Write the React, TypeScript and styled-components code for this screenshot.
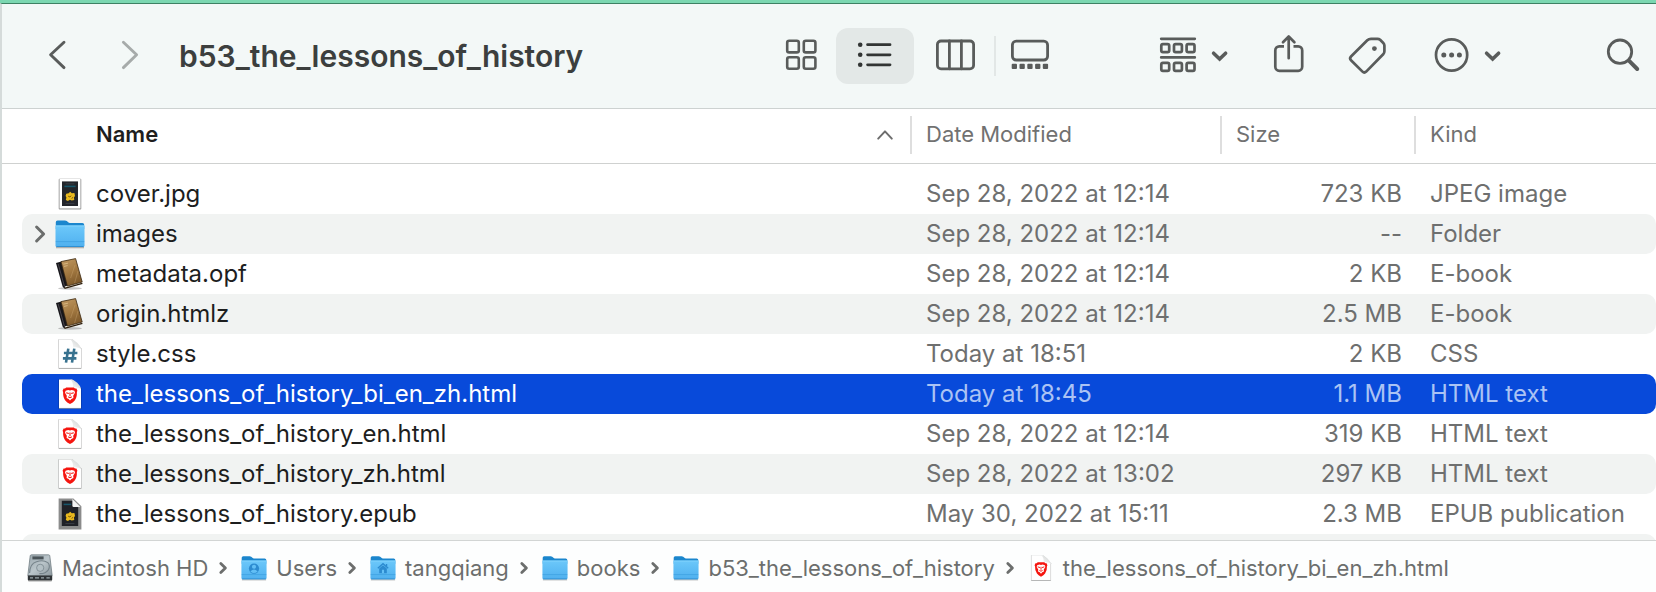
import React from 'react';
import styled, { createGlobalStyle, css } from 'styled-components';

const GlobalStyle = createGlobalStyle`
  *, *::before, *::after { box-sizing: border-box; }
  body {
    margin: 0;
    background: #ffffff;
    font-family: Inter, "Liberation Sans", sans-serif;
    -webkit-font-smoothing: antialiased;
  }
  svg { display: block; flex: none; overflow: visible; }
`;

const Window = styled.main`
  display: flex;
  flex-direction: column;
  height: 100vh;
  overflow: hidden;
  border-top: 3px solid #7bd7b1;
  background: #ffffff;
`;

const Frame = styled.div`
  flex: 1;
  min-height: 0;
  display: flex;
  flex-direction: column;
  border-top: 1px solid #3d8163;
  border-left: 2px solid #d5dbda;
`;

const Toolbar = styled.header`
  display: flex;
  align-items: center;
  gap: 40px;
  padding: 24px 16px 24px 46px;
  background: #f3f8f7;
  border-bottom: 1px solid #cdd2d1;
`;

const History = styled.nav`
  display: flex;
  gap: 55px;
`;

const Title = styled.h1`
  flex: 1;
  min-width: 0;
  margin: 0;
  overflow: hidden;
  white-space: nowrap;
  text-overflow: ellipsis;
  font-size: 30px;
  line-height: 36px;
  font-weight: 600;
  color: #3c3f3e;
`;

const Sections = styled.div`
  display: flex;
  align-items: center;
  gap: 97px;
`;

const ViewSwitch = styled.div`
  display: flex;
  align-items: center;
  gap: 2px;
`;

const Actions = styled.div`
  display: flex;
  align-items: center;
  gap: 40px;
`;

const ToolButton = styled.button<{ $width?: number; $active?: boolean; $divided?: boolean; $dim?: boolean }>`
  display: flex;
  align-items: center;
  justify-content: center;
  gap: 14px;
  width: ${(p) => (p.$width ? `${p.$width}px` : 'auto')};
  height: ${(p) => (p.$divided ? 40 : 56)}px;
  padding: 0;
  border: 0;
  border-right: ${(p) => (p.$divided ? '2px solid #e2e7e6' : '0')};
  border-radius: ${(p) => (p.$active ? 12 : 0)}px;
  background: ${(p) => (p.$active ? '#e3e8e7' : 'transparent')};
  color: ${(p) => (p.$active ? '#323534' : p.$dim ? '#a6abaa' : '#595c5b')};
`;

const Listing = styled.section`
  flex: 1;
  min-height: 0;
  overflow: hidden;
`;

const Table = styled.table`
  display: block;
  width: 100%;
  font-size: 24px;
`;

const columns = css`
  display: grid;
  grid-template-columns: minmax(0, 1fr) 310px 194px 240px;
  align-items: center;
`;

const Head = styled.thead`
  display: block;
  border-bottom: 1px solid #cfd1d0;
`;

const HeadRow = styled.tr`
  ${columns}
  padding: 7px 0 9px 20px;
`;

const HeadCell = styled.th<{ $sorted?: boolean }>`
  display: flex;
  align-items: center;
  justify-content: space-between;
  height: 38px;
  padding: 0 17px 2px 14px;
  border-right: 2px solid #dedede;
  font-size: 22px;
  line-height: 28px;
  text-align: left;
  font-weight: ${(p) => (p.$sorted ? 600 : 400)};
  color: ${(p) => (p.$sorted ? '#1e1e1e' : '#717171')};
  ${(p) => p.$sorted && css`padding-left: 74px;`}
  &:last-child { border-right: 0; }
`;

const SortMark = styled.span`
  display: flex;
  color: #6d6d6d;
`;

const Body = styled.tbody`
  display: block;
  padding: 10px 0 0 20px;
`;

const Row = styled.tr<{ $selected?: boolean }>`
  ${columns}
  height: 40px;
  border-radius: 10px;
  color: #6e6f6f;
  &:nth-child(even) { background: #f1f3f2; }
  ${(p) => p.$selected && css`
    && { background: #084ada; }
    color: #abc3f4;
  `}
`;

const Cell = styled.td<{ $end?: boolean }>`
  padding: 0 14px;
  overflow: hidden;
  white-space: nowrap;
  line-height: 40px;
  text-align: ${(p) => (p.$end ? 'right' : 'left')};
`;

const NameCell = styled.th<{ $selected?: boolean }>`
  display: flex;
  align-items: center;
  min-width: 0;
  padding: 0;
  white-space: nowrap;
  line-height: 40px;
  font-weight: 400;
  color: ${(p) => (p.$selected ? '#ffffff' : '#1d1e1e')};
`;

const ExpandSlot = styled.span`
  display: flex;
  flex: none;
  width: 33px;
  padding-left: 12px;
`;

const Expander = styled.button`
  padding: 0;
  border: 0;
  background: none;
  color: #6b6d6c;
`;

const FileGlyph = styled.span`
  display: flex;
  flex: none;
  margin-right: 11px;
`;

const PathBar = styled.nav`
  border-top: 1px solid #d2d5d4;
  background: #fdfefe;
`;

const Crumbs = styled.ol`
  display: flex;
  align-items: center;
  height: 51px;
  margin: 0;
  padding: 2px 0 0 25px;
  list-style: none;
`;

const Crumb = styled.li`
  display: flex;
  align-items: center;
  color: #6c6e6d;
`;

const CrumbLink = styled.a`
  display: flex;
  align-items: center;
  gap: 9px;
  color: inherit;
  text-decoration: none;
  white-space: nowrap;
  font-size: 22px;
  line-height: 28px;
`;

const CrumbArrow = styled.span`
  display: flex;
  margin: 0 14px 0 11px;
`;

type StrokeProps = { w: number; h?: number; sw?: number; children: React.ReactNode };
const Stroke = ({ w, h = 44, sw = 2.6, children }: StrokeProps) => (
  <svg width={w} height={h} viewBox={`0 0 ${w} ${h}`} fill="none" stroke="currentColor" strokeWidth={sw}
    strokeLinecap="round" strokeLinejoin="round" aria-hidden="true">{children}</svg>
);

const BackIcon = () => <Stroke w={18} sw={2.9}><path d="M16 8.2 2.6 20.8 16 33.6" /></Stroke>;
const ForwardIcon = () => <Stroke w={18} sw={2.9}><path d="M2.4 8.2 15.6 20.8 2.4 33.6" /></Stroke>;

const GridIcon = () => (
  <Stroke w={34} sw={2.6}>
    {[[4.2, 6.8], [20.8, 6.8], [4.2, 23.2], [20.8, 23.2]].map(([x, y]) => (
      <rect key={`${x}-${y}`} x={x} y={y} width="11.6" height="11.6" rx="2" />
    ))}
  </Stroke>
);

const ListIcon = () => (
  <Stroke w={36} sw={2.8}>
    {[10.7, 20.8, 30.8].map((y) => (
      <g key={y}>
        <circle cx="3.2" cy={y} r="2.3" fill="currentColor" stroke="none" />
        <path d={`M10.6 ${y}H33`} />
      </g>
    ))}
  </Stroke>
);

const ColumnsIcon = () => (
  <Stroke w={40} sw={2.8}>
    <rect x="2.4" y="7" width="36.2" height="27.8" rx="3.6" />
    <path d="M14.4 7v27.8M26.4 7v27.8" />
  </Stroke>
);

const GalleryIcon = () => (
  <Stroke w={40} sw={2.8}>
    <rect x="2.4" y="7.2" width="35.2" height="18.8" rx="3.8" />
    {[1.7, 9.5, 17.3, 25.1, 32.8].map((x) => (
      <rect key={x} x={x} y="29.8" width="5.3" height="5.3" rx="1" fill="currentColor" stroke="none" />
    ))}
  </Stroke>
);

const GroupIcon = () => (
  <Stroke w={38} sw={2.7}>
    <path d="M2.2 4.8H35.8M2.2 23.4H35.8" />
    {[10.2, 28.9].map((y) => [2.3, 15, 27.6].map((x) => (
      <rect key={`${x}-${y}`} x={x} y={y} width="7.9" height="7.9" rx="1.6" />
    )))}
  </Stroke>
);

const DownIcon = () => (
  <svg width="18" height="44" viewBox="0 0 18 44" fill="none" stroke="currentColor" strokeWidth="3.6"
    strokeLinecap="round" aria-hidden="true"><path d="M2.6 19.2 8.6 25l6-5.8" /></svg>
);

const ShareIcon = () => (
  <Stroke w={30} sw={2.7}>
    <path strokeLinecap="butt" d="M11 12.4H6.3a4 4 0 0 0-4 4v16.4a4 4 0 0 0 4 4h18.9a4 4 0 0 0 4-4V16.4a4 4 0 0 0-4-4h-4.7" />
    <path d="M15.7 24.2V2.6M10 8.2l5.7-5.7 5.7 5.7" />
  </Stroke>
);

const TagIcon = () => (
  <Stroke w={40} sw={2.7}>
    <path d="M24 4.8H30.5Q32 4.8 33.1 5.8L36.3 9Q37.4 10.1 37.4 11.6V17.2Q37.4 19 36.2 20.3L19.2 37.6Q17.3 39.4 15.5 37.6L4 26.2Q2.2 24.4 4 22.5L20.3 6.3Q21.8 4.8 24 4.8Z" />
    <circle cx="27.4" cy="14.6" r="2.4" fill="currentColor" stroke="none" />
  </Stroke>
);

const MoreIcon = () => (
  <Stroke w={36} sw={2.7}>
    <circle cx="17.6" cy="21" r="15.6" />
    {[9.8, 17.6, 25.4].map((x) => <circle key={x} cx={x} cy="21" r="2.5" fill="currentColor" stroke="none" />)}
  </Stroke>
);

const SearchIcon = () => (
  <Stroke w={34} sw={2.8}>
    <circle cx="14" cy="17.7" r="11.7" />
    <path strokeWidth="4" d="M23.4 27.2 31.2 35" />
  </Stroke>
);

const Gradients = () => (
  <svg width="0" height="0" style={{ position: 'absolute' }} aria-hidden="true">
    <defs>
      <linearGradient id="folderFront" x1="0" y1="0" x2="0" y2="1">
        <stop offset="0" stopColor="#6cc8fa" />
        <stop offset="1" stopColor="#4fb0ef" />
      </linearGradient>
      <linearGradient id="leather" x1="0" y1="0" x2="0.4" y2="1">
        <stop offset="0" stopColor="#c19a63" />
        <stop offset="0.55" stopColor="#a47a42" />
        <stop offset="1" stopColor="#805b2c" />
      </linearGradient>
      <linearGradient id="metal" x1="0" y1="0" x2="1" y2="1">
        <stop offset="0" stopColor="#9aa7ad" />
        <stop offset="0.5" stopColor="#bac5ca" />
        <stop offset="1" stopColor="#8d999f" />
      </linearGradient>
      <linearGradient id="fold" x1="0" y1="1" x2="1" y2="0">
        <stop offset="0" stopColor="#ffffff" />
        <stop offset="1" stopColor="#c9cccb" />
      </linearGradient>
    </defs>
  </svg>
);

const FolderIcon = ({ size = 30, badge }: { size?: number; badge?: 'user' | 'home' }) => (
  <svg width={size} height={size} viewBox="0 0 30 30" aria-hidden="true">
    <path d="M1 28.6h28" stroke="#000" strokeOpacity="0.28" strokeWidth="1.4" />
    <path d="M.8 3.2Q.8 1.4 2.6 1.4H10q1 0 1.8.7l1.4 1.2q.7.6 1.7.6H27.4q1.8 0 1.8 1.8V10H.8Z" fill="#1b86cd" />
    <path d="M.5 7.4Q.5 6.4 1.5 6.4H28.5q1 0 1 1V26.4q0 1.6-1.6 1.6H2.1Q.5 28 .5 26.4Z" fill="url(#folderFront)" />
    <path d="M.8 6.9H29.2" stroke="#93dcff" strokeWidth="0.8" />
    <path d="M.8 22.6H29.2" stroke="#3d9fe0" strokeWidth="0.8" />
    <path d="M1.4 27.5H28.6" stroke="#2f90d3" strokeWidth="1" />
    {badge === 'user' && (
      <g>
        <circle cx="15" cy="15.6" r="5.9" fill="#2c8bd0" />
        <circle cx="15" cy="13.6" r="2.4" fill="#62bff5" />
        <path d="M10.8 18.9q4.2-4.4 8.4 0-4.2 3.6-8.4 0Z" fill="#62bff5" />
      </g>
    )}
    {badge === 'home' && (
      <g>
        <path d="M9 15.4 15 10l6 5.4" fill="none" stroke="#2c8bd0" strokeWidth="1.6" />
        <path d="M10.6 15.6 15 11.7l4.4 3.9V21h-8.8ZM18.3 10.3h1.6v3h-1.6z" fill="#2c8bd0" />
        <path d="M13.8 17h2.4v4h-2.4z" fill="#62bff5" />
      </g>
    )}
  </svg>
);

const Blossom = () => (
  <g>
    <path d="M11.2 15.8l2.5-.6 1.5-1.4 1.6 1.5 2.6-.2.6 2.8-1.1 1.5.4 2.6-2.6.5-1.8-.8-2 1.3-2.1-1.1.6-2.5-.8-1.4Z" fill="#e9b91e" />
    <path d="M13.2 18.2l1.7.8 1.1-1.3M16.6 20.4l1.5-1" stroke="#7c560a" strokeWidth="1" fill="none" />
  </g>
);

const CoverIcon = () => (
  <svg width="30" height="32" viewBox="0 0 30 32" aria-hidden="true">
    <rect x="3.7" y=".7" width="22.6" height="30.9" rx="1" fill="#000" opacity="0.4" />
    <rect x="4.6" y="1" width="20.8" height="29.4" fill="#fff" />
    <rect x="7" y="3.4" width="16" height="24.6" fill="#23252b" />
    <path d="M9.4 8.4h11.2" stroke="#17566b" strokeWidth="1.6" />
    <path d="M10.6 5.8h8.8M10.6 25.4h8.8" stroke="#3c3f48" strokeWidth="0.9" />
    <Blossom />
  </svg>
);

const EpubIcon = () => (
  <svg width="30" height="32" viewBox="0 0 30 32" aria-hidden="true">
    <path d="M3.6 .6H18.4L26.4 8.2V31.4H3.6Z" fill="#000" opacity="0.45" />
    <path d="M4.4 1.2H18L25.6 8.6V30.6H4.4Z" fill="#8b8c8c" />
    <path d="M6.8 2.8H17.6L23.2 9V28H6.8Z" fill="#1f2127" />
    <path d="M8.6 6.4h7.6" stroke="#17566b" strokeWidth="1.5" />
    <path d="M10.4 25.6h9" stroke="#3c3f48" strokeWidth="0.9" />
    <path d="M17.4 1 25.4 9H18.6Q17.4 9 17.4 7.8Z" fill="#f4f4f4" />
    <Blossom />
  </svg>
);

const BookIcon = () => (
  <svg width="30" height="32" viewBox="0 0 30 32" aria-hidden="true">
    <ellipse cx="15" cy="30.4" rx="12" ry="1.3" fill="#000" opacity="0.22" />
    <path d="M1 4.9 6.4 3.4 13 28.4 9.4 30Q8 30 7.6 28.6Z" fill="#17161a" />
    <path d="M9.6 28.6 26.4 23.6 27.3 25.6 10.6 30.6Z" fill="#efe9dc" />
    <path d="M9.4 30.4 27.4 25.4" stroke="#2b1c0c" strokeWidth="1.2" />
    <path d="M6 3.6 20.6.6 27.2 24 12.4 28Z" fill="url(#leather)" stroke="#3a2710" strokeWidth="0.8" />
    <path d="M20 7 15.6 20M23 13l-3.4 12" stroke="#c9a570" strokeWidth="0.8" opacity="0.5" />
    <path d="M8.4 6.2l4.6-1M9 8.4l3.6-.8" stroke="#e0c08c" strokeWidth="0.8" />
    <path d="M3.2 6l6.2 22" stroke="#55525a" strokeWidth="0.8" />
  </svg>
);

const Page = () => (
  <g>
    <path d="M3.4 1.2H17.6L26.6 10.4V30.8H3.4Z" fill="#000" opacity="0.26" />
    <path d="M4 1.4H17.4L26 10.4V30.2H4Z" fill="#fff" />
    <path d="M15.4 1.4Q18.4 4 18 9.4 23 8.8 26 10.8 25.2 7.6 22.2 4.8 18.6 1.4 15.4 1.4Z" fill="url(#fold)" />
    <path d="M4 30.4H26" stroke="#8e9090" strokeOpacity="0.7" strokeWidth="0.8" />
  </g>
);

const HtmlIcon = ({ width = 30, height = 32 }: { width?: number; height?: number }) => (
  <svg width={width} height={height} viewBox="0 0 30 32" aria-hidden="true">
    <Page />
    <path d="M11.2 9.4h7.6l1.2 1.2 1.4-.2 1 2.4-.5 1.3q.2 5.4-2.2 8.3-1.6 2-4.7 3.6-3.1-1.6-4.7-3.6-2.4-2.9-2.2-8.3l-.5-1.3 1-2.4 1.4.2Z" fill="#f5150f" />
    <path d="M10.6 12.8l2.6-.9 1.8.5 1.8-.5 2.6.9.6 2-1.8 3 .2 2.2-2 .9-1.4 1.7-1.4-1.7-2-.9.2-2.2-1.8-3Z" fill="#fff" />
    <path d="M11.2 14.7l2.6.8M18.8 14.7l-2.6.8M15 14.6v3.4M13.2 18.8l1.8.9 1.8-.9" stroke="#f5150f" strokeWidth="1.1" fill="none" />
  </svg>
);

const CssIcon = () => (
  <svg width="30" height="32" viewBox="0 0 30 32" aria-hidden="true">
    <Page />
    <path d="M13.3 10.6 11 24.6M19.3 10.6 17 24.6M8.9 15H22.4M7.9 20.4H21.4" stroke="#38728f" strokeWidth="2.6" fill="none" />
  </svg>
);

const DriveIcon = () => (
  <svg width="26" height="28" viewBox="0 0 26 28" aria-hidden="true">
    <path d="M1 24.6h24v1.8q0 1-1 1H2q-1 0-1-1Z" fill="#000" opacity="0.35" />
    <path d="M3.2 1.8Q3.4.8 4.4.8H21.6q1 0 1.2 1L25.2 21.6H.8Z" fill="url(#metal)" stroke="#67747a" strokeWidth="0.7" />
    <path d="M5.4 2.4H16.6V5.4H5.4Z" fill="#4a5459" />
    <path d="M2.6 19Q3 9.6 9.4 7.8 16 5.4 20.8 8.6 23.6 11.4 21.4 15.8 18 20.2 12.4 19.6" fill="none" stroke="#76838a" strokeWidth="1.1" />
    <circle cx="13.2" cy="13.8" r="3.6" fill="#b4c0c5" stroke="#7f8c93" strokeWidth="0.9" />
    <path d="M.8 21.4H25.2V25.4q0 .9-.9.9H1.7q-.9 0-.9-.9Z" fill="#2f3437" />
    <path d="M3 23.9h3M8 23.9h4M14 23.9h3M19.4 23.9h3.4" stroke="#9aa5aa" strokeWidth="1.2" />
  </svg>
);

type Kind = 'cover' | 'folder' | 'book' | 'css' | 'html' | 'epub';
const glyphs: Record<Kind, React.ReactNode> = {
  cover: <CoverIcon />,
  folder: <FolderIcon />,
  book: <BookIcon />,
  css: <CssIcon />,
  html: <HtmlIcon />,
  epub: <EpubIcon />,
};

type File = { name: string; date: string; size: string; kind: string; glyph: Kind; selected?: boolean };
const files: File[] = [
  { name: 'cover.jpg', date: 'Sep 28, 2022 at 12:14', size: '723 KB', kind: 'JPEG image', glyph: 'cover' },
  { name: 'images', date: 'Sep 28, 2022 at 12:14', size: '--', kind: 'Folder', glyph: 'folder' },
  { name: 'metadata.opf', date: 'Sep 28, 2022 at 12:14', size: '2 KB', kind: 'E-book', glyph: 'book' },
  { name: 'origin.htmlz', date: 'Sep 28, 2022 at 12:14', size: '2.5 MB', kind: 'E-book', glyph: 'book' },
  { name: 'style.css', date: 'Today at 18:51', size: '2 KB', kind: 'CSS', glyph: 'css' },
  { name: 'the_lessons_of_history_bi_en_zh.html', date: 'Today at 18:45', size: '1.1 MB', kind: 'HTML text', glyph: 'html', selected: true },
  { name: 'the_lessons_of_history_en.html', date: 'Sep 28, 2022 at 12:14', size: '319 KB', kind: 'HTML text', glyph: 'html' },
  { name: 'the_lessons_of_history_zh.html', date: 'Sep 28, 2022 at 13:02', size: '297 KB', kind: 'HTML text', glyph: 'html' },
  { name: 'the_lessons_of_history.epub', date: 'May 30, 2022 at 15:11', size: '2.3 MB', kind: 'EPUB publication', glyph: 'epub' },
];

const crumbs: { name: string; icon: React.ReactNode }[] = [
  { name: 'Macintosh HD', icon: <DriveIcon /> },
  { name: 'Users', icon: <FolderIcon size={26} badge="user" /> },
  { name: 'tangqiang', icon: <FolderIcon size={26} badge="home" /> },
  { name: 'books', icon: <FolderIcon size={26} /> },
  { name: 'b53_the_lessons_of_history', icon: <FolderIcon size={26} /> },
  { name: 'the_lessons_of_history_bi_en_zh.html', icon: <HtmlIcon width={26} height={28} /> },
];

export default function App() {
  return (
    <Window>
      <GlobalStyle />
      <Gradients />
      <Frame>
        <Toolbar>
          <History aria-label="History">
            <ToolButton type="button" aria-label="Back"><BackIcon /></ToolButton>
            <ToolButton type="button" aria-label="Forward" $dim><ForwardIcon /></ToolButton>
          </History>
          <Title>b53_the_lessons_of_history</Title>
          <Sections>
            <ViewSwitch role="group" aria-label="View">
              <ToolButton type="button" aria-label="Icons" $width={68}><GridIcon /></ToolButton>
              <ToolButton type="button" aria-label="List" aria-pressed="true" $width={78} $active><ListIcon /></ToolButton>
              <ToolButton type="button" aria-label="Columns" $width={80} $divided><ColumnsIcon /></ToolButton>
              <ToolButton type="button" aria-label="Gallery" $width={64}><GalleryIcon /></ToolButton>
            </ViewSwitch>
            <Actions>
              <ToolButton type="button" aria-label="Group"><GroupIcon /><DownIcon /></ToolButton>
              <ToolButton type="button" aria-label="Share" $width={38}><ShareIcon /></ToolButton>
              <ToolButton type="button" aria-label="Edit tags"><TagIcon /></ToolButton>
              <ToolButton type="button" aria-label="More" $width={82}><MoreIcon /><DownIcon /></ToolButton>
            </Actions>
            <ToolButton type="button" aria-label="Search"><SearchIcon /></ToolButton>
          </Sections>
        </Toolbar>
        <Listing>
          <Table>
            <Head>
              <HeadRow>
                <HeadCell scope="col" aria-sort="ascending" $sorted>
                  Name
                  <SortMark><Stroke w={16} h={16} sw={2}><path d="M1.2 12.6 8 5.4l6.8 7.2" /></Stroke></SortMark>
                </HeadCell>
                <HeadCell scope="col">Date Modified</HeadCell>
                <HeadCell scope="col">Size</HeadCell>
                <HeadCell scope="col">Kind</HeadCell>
              </HeadRow>
            </Head>
            <Body>
              {files.map((f) => (
                <Row key={f.name} $selected={f.selected}>
                  <NameCell scope="row" $selected={f.selected}>
                    <ExpandSlot>
                      {f.glyph === 'folder' && (
                        <Expander type="button" aria-label="Expand images">
                          <Stroke w={12} h={20} sw={3}><path d="M2.6 3l7 7-7 7" /></Stroke>
                        </Expander>
                      )}
                    </ExpandSlot>
                    <FileGlyph>{glyphs[f.glyph]}</FileGlyph>
                    {f.name}
                  </NameCell>
                  <Cell>{f.date}</Cell>
                  <Cell $end>{f.size}</Cell>
                  <Cell>{f.kind}</Cell>
                </Row>
              ))}
              <Row aria-hidden="true" />
            </Body>
          </Table>
        </Listing>
        <PathBar aria-label="Path">
          <Crumbs>
            {crumbs.map((c, i) => (
              <Crumb key={c.name}>
                <CrumbLink href="#">{c.icon}{c.name}</CrumbLink>
                {i < crumbs.length - 1 && (
                  <CrumbArrow><Stroke w={8} h={14} sw={2.8}><path d="M1.8 2.4 6.4 7l-4.6 4.6" /></Stroke></CrumbArrow>
                )}
              </Crumb>
            ))}
          </Crumbs>
        </PathBar>
      </Frame>
    </Window>
  );
}
